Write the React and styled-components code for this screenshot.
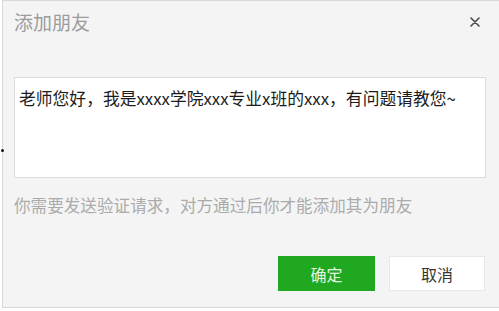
import styled, { createGlobalStyle } from "styled-components";

const GlobalStyle = createGlobalStyle`
  html, body {
    margin: 0;
    padding: 0;
    background: #ffffff;
    font-family: "Noto Sans CJK SC", "Noto Sans", sans-serif;
  }
`;

function AddFriendDialog() {
  return (
    <Dialog>
      <Marker />
      <Header>
        <Title>添加朋友</Title>
        <CloseButton aria-label="关闭">
          <svg width="10" height="10" viewBox="0 0 10 10">
            <path d="M1 1L9 9M9 1L1 9" stroke="#4a4a4a" strokeWidth="1.6" strokeLinecap="round" />
          </svg>
        </CloseButton>
      </Header>
      <MessageBox>老师您好，我是xxxx学院xxx专业x班的xxx，有问题请教您~</MessageBox>
      <Hint>你需要发送验证请求，对方通过后你才能添加其为朋友</Hint>
      <Footer>
        <Button $primary>确定</Button>
        <Button>取消</Button>
      </Footer>
    </Dialog>
  );
}

export default function App() {
  return (
    <>
      <GlobalStyle />
      <AddFriendDialog />
    </>
  );
}

// Styled Components
const Dialog = styled.div`
  position: relative;
  box-sizing: border-box;
  margin-left: 2px;
  width: 497px;
  height: 308px;
  padding: 10px 13px 0 11px;
  background: #f4f4f4;
  border: 1px solid #d8d8d8;
  border-right: none;
  display: flex;
  flex-direction: column;
`;

const Marker = styled.span`
  position: absolute;
  left: -2px;
  top: 148px;
  width: 3px;
  height: 3px;
  border-radius: 50%;
  background: #111;
`;

const Header = styled.div`
  display: flex;
  align-items: center;
  justify-content: space-between;
  height: 22px;
`;

const Title = styled.h1`
  margin: 0;
  font-size: 19px;
  line-height: 22px;
  font-weight: 400;
  color: #9c9c9c;
`;

const CloseButton = styled.button`
  display: flex;
  align-items: center;
  justify-content: center;
  padding: 0;
  margin: 0 5px 0 0;
  border: none;
  background: transparent;
  width: 12px;
  height: 12px;
  cursor: pointer;
`;

const MessageBox = styled.div`
  box-sizing: border-box;
  margin-top: 44px;
  height: 101px;
  padding: 10px 4px;
  background: #ffffff;
  border: 1px solid #dcdcdc;
  font-size: 16.8px;
  line-height: 20px;
  color: #1c1c1c;
  white-space: nowrap;
`;

const Hint = styled.p`
  margin: 18px 0 0;
  font-size: 16.6px;
  line-height: 18px;
  color: #ababab;
`;

const Footer = styled.div`
  display: flex;
  justify-content: flex-end;
  gap: 14px;
  margin-top: 42px;
  padding-right: 1px;
`;

const Button = styled.button`
  box-sizing: border-box;
  width: ${(p) => (p.$primary ? "97px" : "96px")};
  height: 35px;
  padding: 0;
  font-family: inherit;
  font-size: 16px;
  border: 1px solid ${(p) => (p.$primary ? "#20a821" : "#e8e8e8")};
  background: ${(p) => (p.$primary ? "#20a821" : "#ffffff")};
  color: ${(p) => (p.$primary ? "#e4f6e4" : "#353535")};
  cursor: pointer;
`;
